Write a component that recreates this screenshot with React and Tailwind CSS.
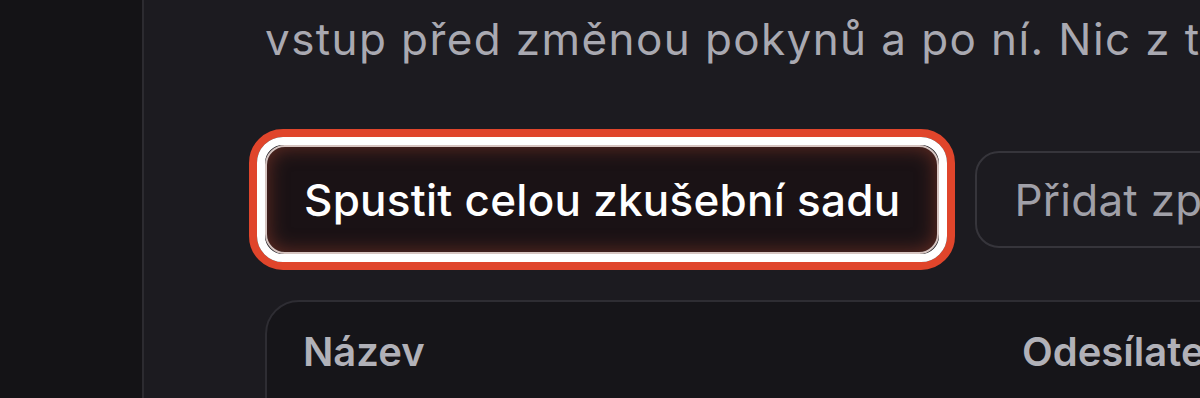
export default function App() {
  return (
    <div
      className="flex h-[398px] w-[1200px] overflow-hidden bg-[#1c1b20]"
      style={{ fontFamily: 'Inter, "Noto Sans", sans-serif' }}
    >
      <aside className="w-[144px] shrink-0 border-r-2 border-[#2c2b30] bg-[#141316]" />

      <main className="min-w-0 flex-1 pl-[121px] pt-[9px]">
        <p className="whitespace-nowrap text-[44px] leading-[60px] tracking-[1.4px] text-[#a9a9b1]">
          vstup před změnou pokynů a po ní. Nic z toho se neuloží.
        </p>

        <div className="-ml-[16px] mt-[60px] flex items-center whitespace-nowrap">
          <div className="rounded-[34px] border-[8px] border-[#e0452b]">
            <div className="rounded-[26px] border-[8px] border-white">
              <button className="flex h-[109px] items-center rounded-[20px] border-2 border-[#d6c4c0] bg-[#1a1215] px-[37px] text-[44px] font-medium tracking-[0.25px] text-white shadow-[inset_0_0_20px_rgba(130,55,40,0.75)]">
                Spustit celou zkušební sadu
              </button>
            </div>
          </div>
          <button className="ml-[20px] flex h-[97px] items-center rounded-[24px] border-2 border-[#36353b] px-[37px] text-[44px] tracking-[0.25px] text-[#a0a0a8]">
            Přidat zprávu
          </button>
        </div>

        <div className="mt-[30px] h-[200px] w-[1100px] rounded-[34px] border-2 border-[#2e2d33] bg-[#161519] pl-[36px] pt-[26px]">
          <div className="grid grid-cols-[719px_1fr] whitespace-nowrap text-[40px] font-semibold leading-[48px] text-[#b1b1b8]">
            <span>Název</span>
            <span>Odesílatel</span>
          </div>
        </div>
      </main>
    </div>
  );
}
